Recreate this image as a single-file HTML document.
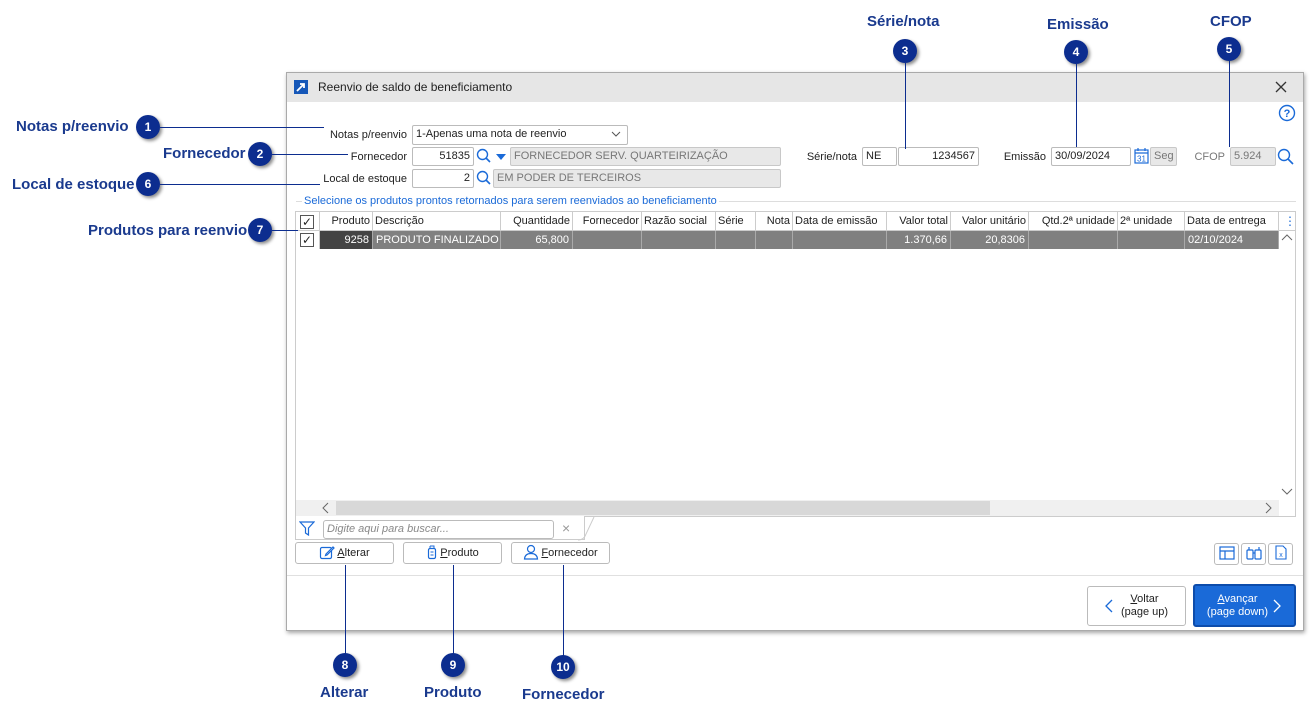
<!DOCTYPE html>
<html><head><meta charset="utf-8"><style>
*{box-sizing:border-box;margin:0;padding:0}
body{width:1313px;height:721px;background:#fff;position:relative;font-family:"Liberation Sans",sans-serif;font-size:12px;color:#222;overflow:hidden}
.a{position:absolute}
.lbl{position:absolute;color:#1a3a8e;font-weight:bold;font-size:15px;white-space:nowrap}
.c{position:absolute;width:24px;height:24px;border-radius:50%;background:#0c2d8f;color:#fff;font-weight:bold;font-size:12px;text-align:center;line-height:24px;box-shadow:2px 2px 3px rgba(0,0,0,.45)}
.hl{position:absolute;height:1px;background:#0c2d8f}
.vl{position:absolute;width:1px;background:#0c2d8f}
.inp{position:absolute;height:19px;border:1px solid #bbb;background:#fff;font-size:11px;line-height:17px;padding:0 3px;border-radius:2px}
.dis{background:#e8e8e8;color:#777;border-color:#c8c8c8}
.fl{position:absolute;font-size:11px;text-align:right}
.th{position:absolute;top:0;height:19px;border-right:1px solid #ccc;font-size:11px;line-height:19px;padding:0 2px;white-space:nowrap;overflow:hidden}
.td{position:absolute;top:19px;height:18px;border-right:1px solid #aaa;font-size:11px;line-height:18px;padding:0 3px;color:#fff;background:#808080;white-space:nowrap;overflow:hidden}
.btn{position:absolute;height:22px;border:1px solid #bbb;border-radius:3px;background:#fff;font-size:11px;line-height:20px;text-align:center}
.btn svg{vertical-align:-4px;margin-right:2px}
</style></head><body>

<div class="a" style="left:286px;top:72px;width:1018px;height:559px;border:1px solid #aaa;box-shadow:1px 2px 4px rgba(0,0,0,.35);background:#fff"></div>
<div class="a" style="left:287px;top:73px;width:1016px;height:29px;background:#e6e6e6"></div>
<div class="a" style="left:294px;top:80px;width:14px;height:14px;background:#1557b8"></div>
<svg class="a" style="left:294px;top:80px" width="14" height="14"><path d="M3 11 L10 4 M6 4 H10 V8" stroke="#fff" stroke-width="1.8" fill="none"/></svg>
<div class="a" style="left:318px;top:80px;font-size:12px">Reenvio de saldo de beneficiamento</div>
<svg class="a" style="left:1274px;top:80px" width="14" height="14"><path d="M2 2L12 12M12 2L2 12" stroke="#333" stroke-width="1.3"/></svg>
<svg class="a" style="left:1278px;top:104px" width="18" height="18"><circle cx="9" cy="9" r="7.5" stroke="#1a6ad8" stroke-width="1.4" fill="none"/><text x="9" y="13" font-size="11" text-anchor="middle" fill="#1a6ad8" font-family="Liberation Sans" font-weight="bold">?</text></svg>

<div class="fl" style="left:300px;top:129px;width:107px">Notas p/reenvio</div>
<div class="inp" style="left:412px;top:125px;width:216px;height:20px">1-Apenas uma nota de reenvio</div>
<svg class="a" style="left:611px;top:131px" width="10" height="7"><path d="M1 1L5 5L9 1" stroke="#555" fill="none"/></svg>
<div class="fl" style="left:300px;top:151px;width:107px">Fornecedor</div>
<div class="inp" style="left:412px;top:147px;width:62px;text-align:right">51835</div>
<svg class="a" style="left:476px;top:148px" width="16" height="16"><circle cx="6.5" cy="6.5" r="5" stroke="#1a6ad8" stroke-width="1.4" fill="none"/><path d="M10 10L14 14" stroke="#1a6ad8" stroke-width="1.6"/></svg>
<svg class="a" style="left:496px;top:154px" width="10" height="6"><path d="M0 0H10L5 6Z" fill="#1a6ad8"/></svg>
<div class="inp dis" style="left:510px;top:147px;width:271px">FORNECEDOR SERV. QUARTEIRIZAÇÃO</div>
<div class="fl" style="left:300px;top:173px;width:107px">Local de estoque</div>
<div class="inp" style="left:412px;top:169px;width:62px;text-align:right">2</div>
<svg class="a" style="left:476px;top:170px" width="16" height="16"><circle cx="6.5" cy="6.5" r="5" stroke="#1a6ad8" stroke-width="1.4" fill="none"/><path d="M10 10L14 14" stroke="#1a6ad8" stroke-width="1.6"/></svg>
<div class="inp dis" style="left:493px;top:169px;width:288px">EM PODER DE TERCEIROS</div>

<div class="fl" style="left:800px;top:151px;width:57px">Série/nota</div>
<div class="inp" style="left:862px;top:147px;width:35px">NE</div>
<div class="inp" style="left:898px;top:147px;width:81px;text-align:right">1234567</div>
<div class="fl" style="left:990px;top:151px;width:56px">Emissão</div>
<div class="inp" style="left:1051px;top:147px;width:80px">30/09/2024</div>
<svg class="a" style="left:1134px;top:147px" width="15" height="17"><rect x="1" y="3" width="13" height="13" stroke="#1a6ad8" fill="none" stroke-width="1.2"/><path d="M1 6H14M4 1V4M11 1V4" stroke="#1a6ad8" stroke-width="1.2"/><text x="7.5" y="14.5" font-size="8" text-anchor="middle" fill="#1a6ad8" font-family="Liberation Sans">31</text></svg>
<div class="inp dis" style="left:1150px;top:147px;width:27px;font-size:11px">Seg</div>
<div class="fl" style="left:1190px;top:151px;width:35px;color:#777">CFOP</div>
<div class="inp dis" style="left:1230px;top:147px;width:46px">5.924</div>
<svg class="a" style="left:1277px;top:148px" width="18" height="18"><circle cx="7" cy="7" r="5.5" stroke="#1a6ad8" stroke-width="1.4" fill="none"/><path d="M11 11L16 16" stroke="#1a6ad8" stroke-width="1.6"/></svg>

<div class="a" style="left:296px;top:201px;width:1000px;height:1px;background:#ddd"></div>
<div class="a" style="left:302px;top:195px;background:#fff;padding:0 2px;color:#1a6ad8;font-size:11px">Selecione os produtos prontos retornados para serem reenviados ao beneficiamento</div>

<div class="a" style="left:295px;top:211px;width:1001px;height:306px;border:1px solid #ccc;background:#fff">
 <div class="a" style="left:0;top:0;width:999px;height:19px;background:#fff;border-bottom:1px solid #ccc"></div>
 <div class="th" style="left:0;width:24px"></div>
 <div class="th" style="left:24px;width:53px;text-align:right">Produto</div>
 <div class="th" style="left:77px;width:128px">Descrição</div>
 <div class="th" style="left:205px;width:72px;text-align:right">Quantidade</div>
 <div class="th" style="left:277px;width:69px;text-align:right">Fornecedor</div>
 <div class="th" style="left:346px;width:74px">Razão social</div>
 <div class="th" style="left:420px;width:40px">Série</div>
 <div class="th" style="left:460px;width:37px;text-align:right">Nota</div>
 <div class="th" style="left:497px;width:94px">Data de emissão</div>
 <div class="th" style="left:591px;width:64px;text-align:right">Valor total</div>
 <div class="th" style="left:655px;width:78px;text-align:right">Valor unitário</div>
 <div class="th" style="left:733px;width:89px;text-align:right">Qtd.2ª unidade</div>
 <div class="th" style="left:822px;width:67px">2ª unidade</div>
 <div class="th" style="left:889px;width:94px">Data de entrega</div>
 <div class="a" style="left:988px;top:2px;color:#1a6ad8;font-size:12px">⋮</div>
 <div class="td" style="left:0;width:24px;background:#fff;border-right:1px solid #ccc"></div>
 <div class="td" style="left:24px;width:53px;background:#444;text-align:right">9258</div>
 <div class="td" style="left:77px;width:128px">PRODUTO FINALIZADO</div>
 <div class="td" style="left:205px;width:72px;text-align:right">65,800</div>
 <div class="td" style="left:277px;width:69px"></div>
 <div class="td" style="left:346px;width:74px"></div>
 <div class="td" style="left:420px;width:40px"></div>
 <div class="td" style="left:460px;width:37px"></div>
 <div class="td" style="left:497px;width:94px"></div>
 <div class="td" style="left:591px;width:64px;text-align:right">1.370,66</div>
 <div class="td" style="left:655px;width:78px;text-align:right">20,8306</div>
 <div class="td" style="left:733px;width:89px"></div>
 <div class="td" style="left:822px;width:67px"></div>
 <div class="td" style="left:889px;width:94px">02/10/2024</div>
 <div class="a" style="left:4px;top:3px;width:14px;height:14px;border:1px solid #555;font-size:12px;line-height:12px;text-align:center">✓</div>
 <div class="a" style="left:4px;top:21px;width:14px;height:14px;border:1px solid #555;font-size:12px;line-height:12px;text-align:center;background:#fff">✓</div>
 <svg class="a" style="left:985px;top:22px" width="12" height="8"><path d="M1 6L6 1L11 6" stroke="#666" fill="none"/></svg>
 <svg class="a" style="left:985px;top:276px" width="12" height="8"><path d="M1 1L6 6L11 1" stroke="#666" fill="none"/></svg>
 <div class="a" style="left:0;top:288px;width:983px;height:16px;background:#f0f0f0"></div>
 <div class="a" style="left:40px;top:289px;width:654px;height:14px;background:#d8d8d8"></div>
 <svg class="a" style="left:26px;top:290px" width="8" height="12"><path d="M6 1L1 6L6 11" stroke="#666" fill="none"/></svg>
 <svg class="a" style="left:969px;top:290px" width="8" height="12"><path d="M1 1L6 6L1 11" stroke="#666" fill="none"/></svg>
</div>
<div class="a" style="left:295px;top:516px;width:290px;height:24px;border:1px solid #ccc;border-top:none;background:#fff"></div>
<svg class="a" style="left:299px;top:521px" width="16" height="15"><path d="M1 1H15L9.5 7V14L6.5 12V7Z" stroke="#1a6ad8" fill="none" stroke-width="1.2"/></svg>
<div class="inp" style="left:323px;top:520px;width:231px;height:19px;color:#888;font-style:italic;border-radius:3px">Digite aqui para buscar...</div>
<div class="a" style="left:562px;top:520px;color:#999;font-size:14px">×</div>
<svg class="a" style="left:578px;top:516px" width="18" height="25"><path d="M0 24Q6 24 8 18L16 1" stroke="#ccc" fill="none"/></svg>

<div class="btn" style="left:295px;top:542px;width:99px"><svg width="16" height="16"><rect x="1.5" y="3.5" width="11" height="11" rx="1.5" stroke="#1a6ad8" fill="none" stroke-width="1.2"/><path d="M7 10L14 3L15 4L8 11L6.5 11.5Z" stroke="#1a6ad8" fill="#fff" stroke-width="1.2"/></svg><u>A</u>lterar</div>
<div class="btn" style="left:403px;top:542px;width:99px"><svg width="12" height="16"><rect x="2.5" y="4.5" width="7" height="10" rx="1.5" stroke="#1a6ad8" fill="none" stroke-width="1.2"/><path d="M4 2H8V4.5M4 2V4.5M4.5 8H7.5M4.5 11H7.5" stroke="#1a6ad8" fill="none"/></svg><u>P</u>roduto</div>
<div class="btn" style="left:511px;top:542px;width:99px"><svg width="16" height="16"><circle cx="8" cy="5" r="3.5" stroke="#1a6ad8" fill="none" stroke-width="1.2"/><path d="M1.5 15Q2 9.5 8 9.5Q14 9.5 14.5 15Z" stroke="#1a6ad8" fill="none" stroke-width="1.2"/></svg><u>F</u>ornecedor</div>
<div class="btn" style="left:1214px;top:543px;width:25px"><svg width="16" height="14" style="margin:0;vertical-align:-3px"><rect x="1" y="1" width="14" height="12" stroke="#1a6ad8" fill="none" stroke-width="1.2"/><path d="M1 5H15M6 5V13" stroke="#1a6ad8" stroke-width="1.2"/></svg></div>
<div class="btn" style="left:1241px;top:543px;width:25px"><svg width="16" height="14" style="margin:0;vertical-align:-3px"><rect x="1" y="4" width="6" height="9" rx="1" stroke="#1a6ad8" fill="none" stroke-width="1.2"/><rect x="9" y="4" width="6" height="9" rx="1" stroke="#1a6ad8" fill="none" stroke-width="1.2"/><path d="M3 4V1M13 4V1M7 7H9" stroke="#1a6ad8" stroke-width="1.2"/></svg></div>
<div class="btn" style="left:1268px;top:543px;width:25px"><svg width="12" height="15" style="margin:0;vertical-align:-3px"><path d="M1 1H8L11 4V14H1Z" stroke="#1a6ad8" fill="none" stroke-width="1.1"/><text x="6" y="12" font-size="7" text-anchor="middle" fill="#1a6ad8" font-family="Liberation Sans">x</text></svg></div>
<div class="a" style="left:287px;top:575px;width:1016px;height:1px;background:#e0e0e0"></div>

<div class="btn" style="left:1087px;top:586px;width:99px;height:40px;line-height:13px;padding-top:6px;padding-left:16px"><u>V</u>oltar<br>(page up)</div>
<svg class="a" style="left:1105px;top:599px" width="8" height="14"><path d="M7 1L1 7L7 13" stroke="#1a6ad8" fill="none" stroke-width="1.3"/></svg>
<div class="btn" style="left:1193px;top:584px;width:103px;height:43px;background:#1a6ad8;color:#fff;border:2px solid #0d4cab;line-height:13px;padding-top:7px;padding-right:14px"><u>A</u>vançar<br>(page down)</div>
<svg class="a" style="left:1273px;top:599px" width="8" height="14"><path d="M1 1L7 7L1 13" stroke="#fff" fill="none" stroke-width="1.3"/></svg>

<div class="lbl" style="left:16px;top:118px">Notas p/reenvio</div>
<div class="c" style="left:136px;top:115px">1</div><div class="hl" style="left:160px;top:127px;width:164px"></div>
<div class="lbl" style="left:163px;top:145px">Fornecedor</div>
<div class="c" style="left:248px;top:142px">2</div><div class="hl" style="left:272px;top:154px;width:76px"></div>
<div class="lbl" style="left:12px;top:176px">Local de estoque</div>
<div class="c" style="left:136px;top:172px">6</div><div class="hl" style="left:160px;top:184px;width:160px"></div>
<div class="lbl" style="left:88px;top:222px">Produtos para reenvio</div>
<div class="c" style="left:248px;top:218px">7</div><div class="hl" style="left:272px;top:230px;width:26px"></div>

<div class="lbl" style="left:867px;top:13px">Série/nota</div>
<div class="c" style="left:893px;top:39px">3</div><div class="vl" style="left:905px;top:63px;height:86px"></div>
<div class="lbl" style="left:1047px;top:16px">Emissão</div>
<div class="c" style="left:1064px;top:40px">4</div><div class="vl" style="left:1076px;top:64px;height:83px"></div>
<div class="lbl" style="left:1210px;top:13px">CFOP</div>
<div class="c" style="left:1217px;top:37px">5</div><div class="vl" style="left:1229px;top:61px;height:86px"></div>

<div class="vl" style="left:345px;top:565px;height:89px"></div><div class="c" style="left:333px;top:653px">8</div>
<div class="lbl" style="left:320px;top:684px">Alterar</div>
<div class="vl" style="left:453px;top:565px;height:89px"></div><div class="c" style="left:441px;top:653px">9</div>
<div class="lbl" style="left:424px;top:684px">Produto</div>
<div class="vl" style="left:563px;top:565px;height:91px"></div><div class="c" style="left:551px;top:655px">10</div>
<div class="lbl" style="left:522px;top:686px">Fornecedor</div>
</body></html>
